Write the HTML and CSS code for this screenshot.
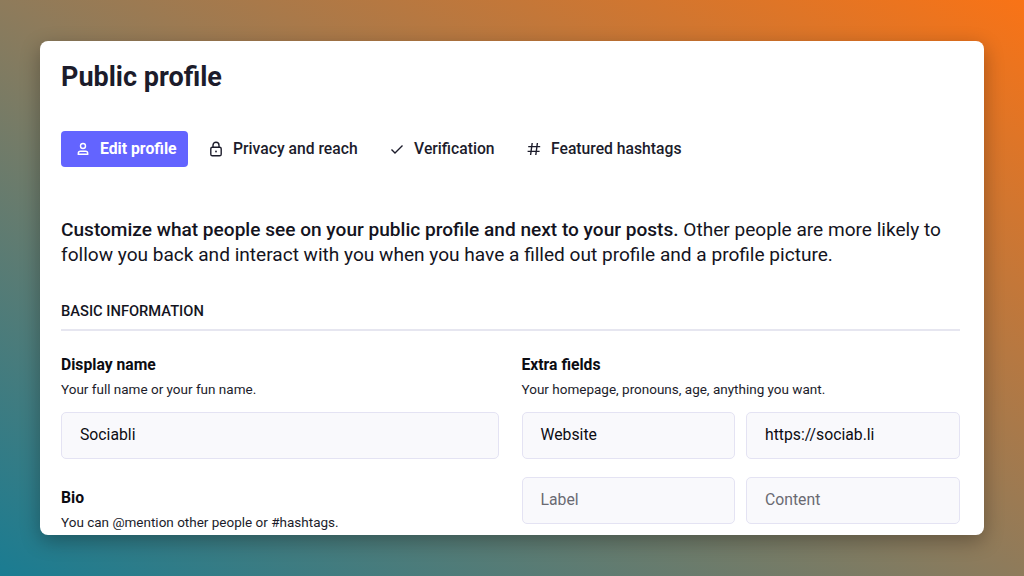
FILE: index.html
```html
<!DOCTYPE html>
<html lang="en">
<head>
<meta charset="utf-8">
<title>Public profile</title>
<link rel="stylesheet" href="styles.css">
</head>
<body>
<main class="card">
  <h1 class="title">Public profile</h1>
  <nav class="tabs">
    <a class="tab tab-active">
      <svg class="icon" viewBox="0 0 16 16"><circle cx="8" cy="5" r="2.5"/><path d="M3.3 13.3v-1c0-1.2 1-2.1 2.2-2.1h5c1.2 0 2.2.9 2.2 2.1v1z"/></svg>
      <span>Edit profile</span>
    </a>
    <a class="tab">
      <svg class="icon" viewBox="0 0 16 16"><rect x="2.8" y="6.2" width="10.4" height="8.6" rx="1.6"/><path d="M5 6.2V4.2a3 3 0 0 1 6 0v2"/><circle class="dot" cx="8" cy="10.5" r="0.9"/></svg>
      <span>Privacy and reach</span>
    </a>
    <a class="tab">
      <svg class="icon" viewBox="0 0 16 16"><path d="M2.5 8.5l3.5 3.5 7.5-7.5"/></svg>
      <span>Verification</span>
    </a>
    <a class="tab">
      <svg class="icon" viewBox="0 0 16 16"><path d="M6.2 2L4.6 14M11.4 2L9.8 14M2.2 5.6h12M1.6 10.4h12"/></svg>
      <span>Featured hashtags</span>
    </a>
  </nav>
  <p class="intro"><strong>Customize what people see on your public profile and next to your posts.</strong> Other people are more likely to follow you back and interact with you when you have a filled out profile and a profile picture.</p>
  <h2 class="section">BASIC INFORMATION</h2>
  <div class="columns">
    <section class="col">
      <h3 class="label">Display name</h3>
      <p class="hint">Your full name or your fun name.</p>
      <div class="input">Sociabli</div>
      <h3 class="label label-bio">Bio</h3>
      <p class="hint">You can @mention other people or #hashtags.</p>
    </section>
    <section class="col">
      <h3 class="label">Extra fields</h3>
      <p class="hint">Your homepage, pronouns, age, anything you want.</p>
      <div class="pairs">
        <div class="input">Website</div>
        <div class="input">https://sociab.li</div>
        <div class="input placeholder">Label</div>
        <div class="input placeholder">Content</div>
      </div>
    </section>
  </div>
</main>
</body>
</html>
```

FILE: styles.css
```css
* { box-sizing: border-box; }
html, body { margin: 0; height: 100%; }
body {
  height: 576px;
  overflow: hidden;
  padding: 41px 40px;
  font-family: Roboto, "Liberation Sans", sans-serif;
  color: #14141e;
  background: linear-gradient(to top right, #1a7c92 0%, #8e7b5b 50%, #f97316 100%);
}
.card {
  height: 494px;
  overflow: hidden;
  background: #fff;
  border-radius: 8px;
  padding: 19px 24px 0 21px;
  box-shadow: 0 6px 20px rgba(0, 0, 0, 0.3);
}
.title {
  margin: 0;
  font-size: 27px;
  line-height: 34px;
  font-weight: 700;
  color: #1c1c2b;
}
.tabs {
  display: flex;
  gap: 6.5px;
  margin-top: 37px;
}
.tab {
  display: flex;
  align-items: center;
  gap: 9px;
  height: 36px;
  padding: 0 11px 1px 14px;
  border-radius: 4px;
  font-size: 15.7px;
  font-weight: 500;
  color: #1c1c2b;
}
.tab-active {
  background: #6364ff;
  color: #fff;
  font-size: 15.75px;
  font-weight: 700;
}
.icon {
  width: 16px;
  height: 16px;
  fill: none;
  stroke: currentColor;
  stroke-width: 1.4;
}
.dot { fill: currentColor; stroke: none; }
.intro {
  margin: 50px 0 0;
  font-size: 19.08px;
  line-height: 25px;
  color: #14141e;
}
.intro strong { font-weight: 500; }
.section {
  margin: 34px 0 0;
  padding-bottom: 8px;
  font-size: 14.7px;
  line-height: 20px;
  font-weight: 500;
  border-bottom: 2px solid #e6e6f0;
}
.columns {
  display: grid;
  grid-template-columns: 438px 438px;
  gap: 22.5px;
  margin-top: 24px;
}
.label {
  margin: 0;
  font-size: 15.7px;
  line-height: 20px;
  font-weight: 700;
  color: #0c0c12;
}
.label-bio { margin-top: 29px; }
.hint {
  margin: 5px 0 0;
  font-size: 13.5px;
  line-height: 18px;
  color: #1c1c2b;
}
.input {
  display: flex;
  align-items: center;
  height: 47px;
  margin-top: 14px;
  padding: 0 18px 3px;
  background: #f9f9fc;
  border: 1.5px solid #e4e3f3;
  border-radius: 5px;
  font-size: 15.75px;
  color: #0c0c12;
}
.pairs {
  display: grid;
  grid-template-columns: 1fr 1fr;
  column-gap: 11px;
  row-gap: 18px;
  margin-top: 14px;
}
.pairs .input { margin-top: 0; }
.placeholder { color: #6a6a72; }
```
